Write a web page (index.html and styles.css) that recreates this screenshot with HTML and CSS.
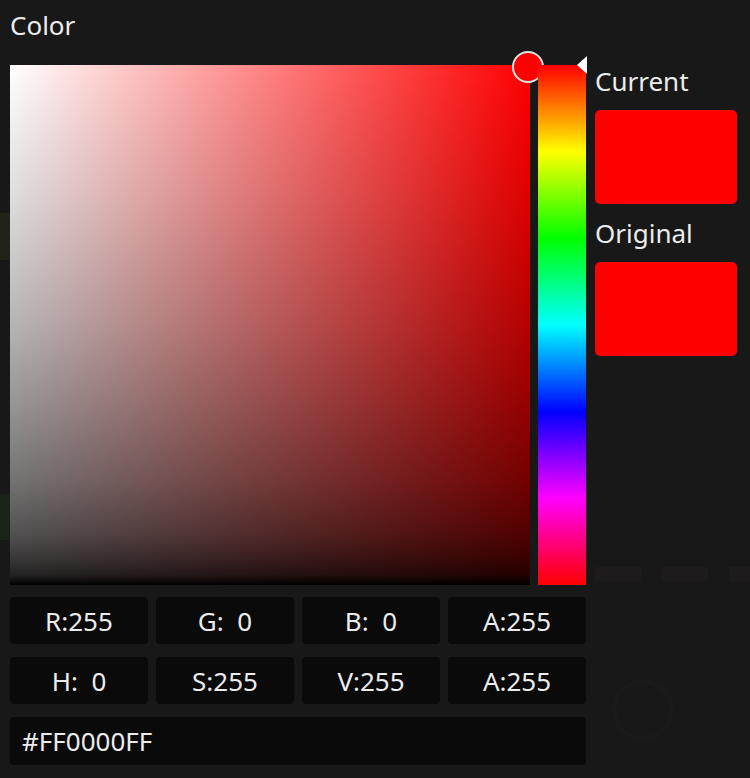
FILE: index.html
```html
<!DOCTYPE html>
<html>
<head>
<meta charset="utf-8">
<link rel="stylesheet" href="styles.css">
</head>
<body>
<div class="panel">
  <div class="title">Color</div>
  <div class="picker">
    <div class="sv">
      <div class="sv-handle"></div>
    </div>
    <div class="hue">
      <div class="hue-arrow"></div>
    </div>
    <div class="side">
      <div class="label">Current</div>
      <div class="swatch"></div>
      <div class="label label-second">Original</div>
      <div class="swatch"></div>
    </div>
  </div>
  <div class="fields">
    <div class="field">R:255</div>
    <div class="field">G:  0</div>
    <div class="field">B:  0</div>
    <div class="field">A:255</div>
    <div class="field">H:  0</div>
    <div class="field">S:255</div>
    <div class="field">V:255</div>
    <div class="field">A:255</div>
    <div class="field hex">#FF0000FF</div>
  </div>
</div>
</body>
</html>
```
FILE: styles.css
```css
html, body {
  margin: 0;
  padding: 0;
}
body {
  width: 750px;
  height: 778px;
  overflow: hidden;
  font-family: "Noto Sans", "DejaVu Sans", sans-serif;
  color: #ececec;
  background:
    radial-gradient(circle at 643px 710px, transparent 26px, #1a1a1a 27px, #1a1a1a 30px, transparent 31px),
    linear-gradient(#1d1b1b, #1d1b1b) 595px 567px / 46px 14px no-repeat,
    linear-gradient(#1d1b1b, #1d1b1b) 662px 567px / 46px 14px no-repeat,
    linear-gradient(#1d1b1b, #1d1b1b) 729px 567px / 30px 14px no-repeat,
    linear-gradient(#21231a, #21231a) 0 213px / 10px 47px no-repeat,
    linear-gradient(#1a2219, #1a2219) 0 494px / 10px 46px no-repeat,
    #181818;
}
.panel {
  padding: 0 10px;
}
.title {
  margin: 5px 0 20px;
  font-size: 26px;
  line-height: 40px;
  height: 40px;
}
.picker {
  display: flex;
  height: 520px;
}
.sv {
  position: relative;
  width: 520px;
  height: 520px;
  flex: none;
  background:
    linear-gradient(to top,
      rgba(0,0,0,1) 0%,
      rgba(0,0,0,0.86) 2%,
      rgba(0,0,0,0.78) 5%,
      rgba(0,0,0,0.68) 10%,
      rgba(0,0,0,0.55) 20%,
      rgba(0,0,0,0.41) 35%,
      rgba(0,0,0,0.29) 50%,
      rgba(0,0,0,0.13) 75%,
      rgba(0,0,0,0) 100%),
    linear-gradient(to right, #fff 0%, #f00 100%);
}
.sv-handle {
  position: absolute;
  left: 502px;
  top: -14px;
  width: 32px;
  height: 32px;
  box-sizing: border-box;
  border-radius: 50%;
  border: 2px solid #e4e4e4;
  background: #f00;
}
.hue {
  position: relative;
  width: 48px;
  height: 520px;
  flex: none;
  margin-left: 8px;
  border-top-right-radius: 4px;
  background: linear-gradient(to bottom, #f00 0%, #ff0 16.667%, #0f0 33.333%, #0ff 50%, #00f 66.667%, #f0f 83.333%, #f00 100%);
}
.hue-arrow {
  position: absolute;
  left: 39px;
  top: -9px;
  width: 0;
  height: 0;
  border-top: 9px solid transparent;
  border-bottom: 9px solid transparent;
  border-right: 10px solid #fff;
}
.side {
  width: 142px;
  margin-left: 9px;
  flex: none;
}
.label {
  font-size: 26px;
  line-height: 32px;
  height: 32px;
  margin-bottom: 13px;
}
.label-second {
  margin-top: 13px;
}
.swatch {
  height: 94px;
  background: #f00;
  border-radius: 5px;
}
.fields {
  margin-top: 12px;
  display: grid;
  grid-template-columns: repeat(4, 138px);
  column-gap: 8px;
  row-gap: 13px;
}
.field {
  height: 47px;
  background: #0a0a0a;
  border-radius: 4px;
  display: flex;
  align-items: center;
  justify-content: center;
  font-size: 26px;
  white-space: pre;
  color: #ececec;
}
.hex {
  grid-column: 1 / -1;
  justify-content: flex-start;
  padding-left: 12px;
  height: 48px;
}
```
